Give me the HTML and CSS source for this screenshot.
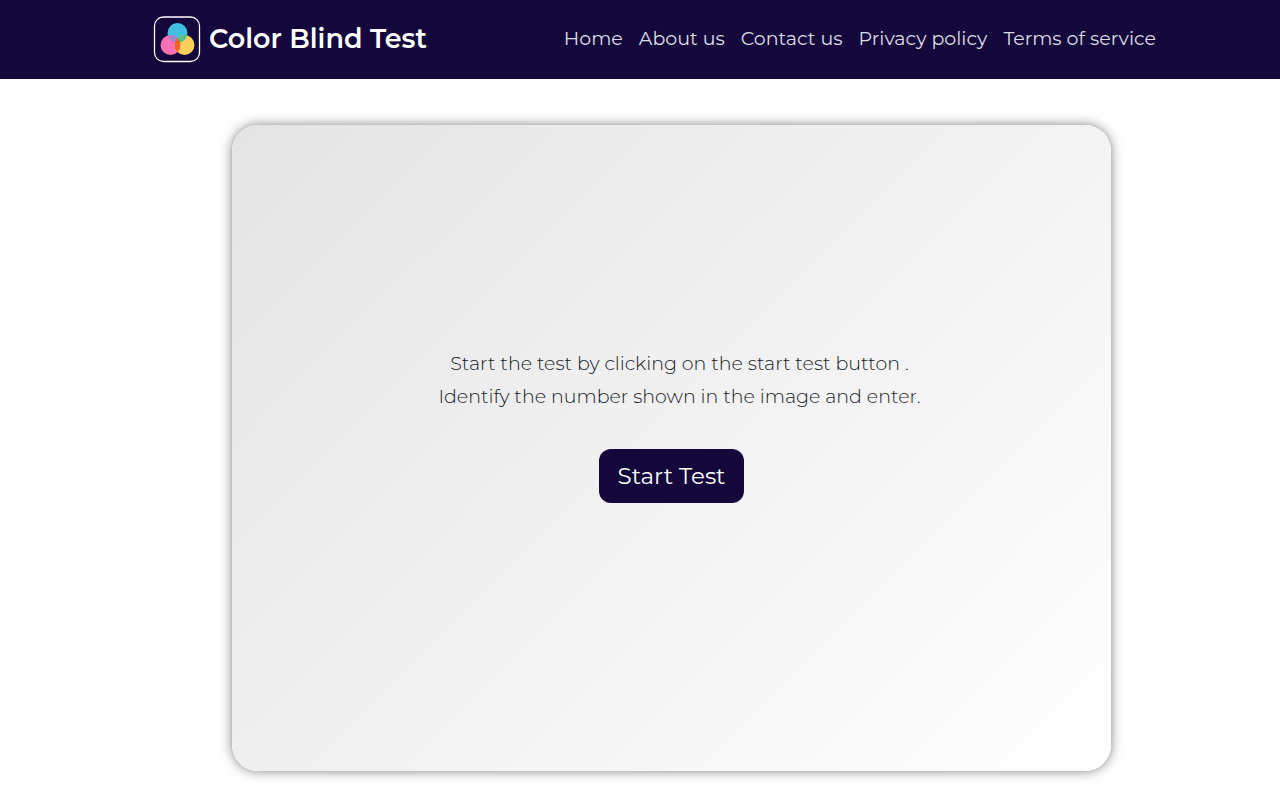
FILE: index.html
```html
<!DOCTYPE html>
<html lang="en">
<head>
<meta charset="utf-8">
<meta name="viewport" content="width=device-width, initial-scale=1">
<title>Color Blind Test</title>
<link rel="stylesheet" href="styles.css">
</head>
<body>
<header class="site-header">
  <a class="brand" href="#">
    <svg class="brand-logo" viewBox="0 0 48 48" aria-hidden="true">
      <defs>
        <clipPath id="blue-area"><circle cx="24.500" cy="18" r="10"/></clipPath>
        <clipPath id="pink-area"><circle cx="17.500" cy="30" r="10"/></clipPath>
      </defs>
      <rect x="1.500" y="2" width="45" height="44.500" rx="9" fill="none" stroke="#fff" stroke-width="1.300"/>
      <circle cx="24.500" cy="18" r="10" fill="#40bfdf"/>
      <circle cx="17.500" cy="30" r="10" fill="#ff6fb5"/>
      <circle cx="31.500" cy="30" r="10" fill="#ffcf5e"/>
      <circle cx="17.500" cy="30" r="10" fill="#9f86c8" clip-path="url(#blue-area)"/>
      <circle cx="31.500" cy="30" r="10" fill="#55bf88" clip-path="url(#blue-area)"/>
      <circle cx="31.500" cy="30" r="10" fill="#f26322" clip-path="url(#pink-area)"/>
    </svg>
    <span>Color Blind Test</span>
  </a>
  <nav class="site-nav">
    <a href="#">Home</a>
    <a href="#">About us</a>
    <a href="#">Contact us</a>
    <a href="#">Privacy policy</a>
    <a href="#">Terms of service</a>
  </nav>
</header>
<main class="page">
  <section class="test-card">
    <p class="instructions">Start the test by clicking on the start test button .<br>Identify the number shown in the image and enter.</p>
    <button class="start-button" type="button">Start Test</button>
  </section>
</main>
</body>
</html>
```
FILE: styles.css
```css
* {
  box-sizing: border-box;
}

body {
  margin: 0;
  background: #fff;
  color: #15191d;
  font-family: Montserrat, Inter, "Open Sans", sans-serif;
}

.site-header {
  display: flex;
  align-items: center;
  justify-content: space-between;
  padding: 15px 124px 16px 153px;
  background: #13073b;
}

.brand {
  display: flex;
  align-items: center;
  gap: 8px;
  color: #fff;
  font-size: 27px;
  font-weight: 600;
  line-height: 36px;
  text-decoration: none;
  white-space: nowrap;
}

.brand-logo {
  width: 48px;
  height: 48px;
}

.site-nav {
  display: flex;
  gap: 16px;
  font-size: 19px;
  line-height: 30px;
  white-space: nowrap;
}

.site-nav a {
  color: #dedce4;
  text-decoration: none;
}

.page {
  padding: 46px 169px 29px 232px;
}

.test-card {
  display: flex;
  flex-direction: column;
  align-items: center;
  justify-content: center;
  gap: 36px;
  min-height: 646px;
  padding: 0 16px 46px;
  border-radius: 26px;
  background: linear-gradient(135deg, #e4e4e4, #fff);
  box-shadow: 0 0 12px rgba(0, 0, 0, 0.5);
}

.instructions {
  margin: 0;
  padding-left: 16px;
  font-size: 19px;
  font-weight: 300;
  line-height: 33px;
  text-align: center;
}

.start-button {
  padding: 10px 19px;
  border: 0;
  border-radius: 12px;
  background: #13073b;
  color: #fff;
  font-family: inherit;
  font-size: 23px;
  line-height: 34px;
}
```
